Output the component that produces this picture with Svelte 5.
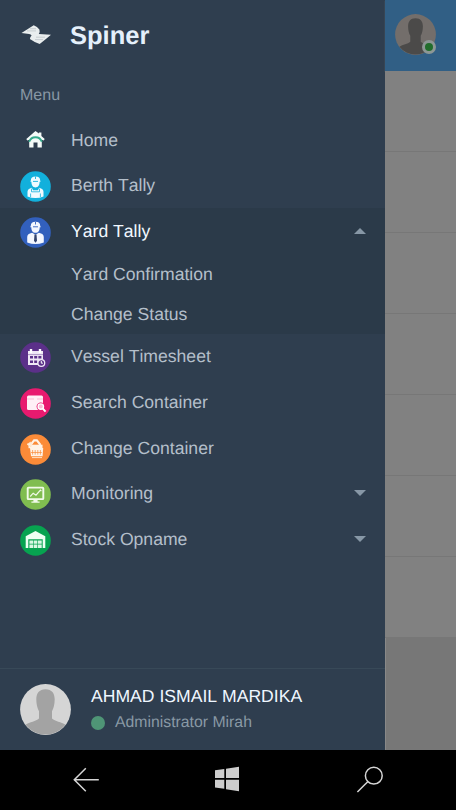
<script>
  const before = [
    { label: 'Home', icon: 'home' },
    { label: 'Berth Tally', icon: 'worker', color: '#12b0dc' }
  ];
  const after = [
    { label: 'Vessel Timesheet', icon: 'calendar', color: '#5b3089' },
    { label: 'Search Container', icon: 'search', color: '#e81a6f' },
    { label: 'Change Container', icon: 'basket', color: '#fb8b38' },
    { label: 'Monitoring', icon: 'monitor', color: '#80bd50', caret: true },
    { label: 'Stock Opname', icon: 'warehouse', color: '#07a350', caret: true }
  ];
  const rows = [0, 1, 2, 3, 4, 5, 6];
</script>

{#snippet icon(name, color)}
  <svg class="icon" viewBox="0 0 31 31">
    {#if color}<circle cx="15.5" cy="15.5" r="15.3" fill={color} />{/if}
    {#if name === 'home'}
      <path d="M15.5 4.9 6.3 13l1 1.4 1.9-.6v7.7h4.3v-5h4v5h4.3v-7.7l1.9.6 1-1.4-3.3-3V6.6h-2.500v1z" fill="#f4faf8" />
      <path d="M9.200 15.800q1.500-4.600 6.300-4.600t6.300 4.600" fill="none" stroke="#35a98c" stroke-width="1.900" />
    {:else if name === 'worker'}
      <path d="M10.800 9.500q0-4 4.700-4t4.700 4l.4 1.300h-1c0 4-1.800 5.700-4.100 5.700s-4.100-1.700-4.100-5.700h-1z" fill="#effaff" />
      <path d="M15.500 5.500v2.500M13 10.400h5" stroke={color} stroke-width=".9" />
      <path d="M7.500 25.500v-4.700q0-3 4.300-4.100l1.300 2.500h4.800l1.300-2.500q4.300 1.100 4.300 4.100v4.700q-4 1.500-8 1.500t-8-1.500z" fill="#effaff" />
      <path d="M11.500 17.600v3.200h8v-3.200M10.600 22.500v3.500M20.400 22.500v3.500" fill="none" stroke={color} stroke-width=".8" />
    {:else if name === 'manager'}
      <path d="M10.800 8.800q0-4 4.700-4t4.700 4l.6 1.400h-1.100c0 4-1.900 5.600-4.200 5.600s-4.200-1.600-4.200-5.600h-1.100z" fill="#f4f7ff" />
      <path d="M15.500 5v2.500M13 9.800h5" stroke={color} stroke-width=".9" />
      <path d="M7.200 25.500V20q0-3.100 4.900-4.200l3.400 2 3.400-2q4.900 1.100 4.900 4.200v5.500q-4.300 1.500-8.300 1.500t-8.300-1.500z" fill="#f4f7ff" />
      <path d="m14.500 17.500-.5 6.200 1.500 2 1.500-2-.5-6.200z" fill="#33436d" />
    {:else if name === 'calendar'}
      <path d="M8 9h15v14H8z" fill="#eee7f5" />
      <path d="M11 7v4M20 7v4" stroke="#fff" stroke-width="2.400" />
      <path d="M8 12.600h15" stroke="#9b7fb8" stroke-width=".8" />
      <path d="M10 14h3v2.600h-3zM14.200 14h3v2.600h-3zM18.400 14h3v2.600h-3zM10 18.500h3V21h-3zM14.200 18.500h3V21h-3z" fill={color} />
      <circle cx="21.300" cy="21" r="3.400" fill={color} stroke="#eee7f5" stroke-width="1.300" />
      <path d="M21.300 19v2.200h1.600" fill="none" stroke="#fff" />
    {:else if name === 'search'}
      <rect x="7" y="7.500" width="16" height="14.500" rx="1.500" fill="#fff0f6" />
      <path d="M7 11h7M17 11h6" stroke="#f8a9c9" stroke-width=".7" />
      <circle cx="20.800" cy="18.600" r="4.200" fill={color} />
      <circle cx="20.800" cy="18.600" r="2.700" fill="#f9bdd6" stroke="#fff" stroke-width="1.400" />
      <path d="m22.600 20.400 3 3.200" stroke="#fff" stroke-width="2" />
    {:else if name === 'basket'}
      <path d="m10.500 11 3.600-4.600h2.800l3.600 4.600" fill="none" stroke="#fff3e7" stroke-width="2.100" />
      <path d="M8.500 10.700h14v3.500h-14z" fill="#fff3e7" />
      <path d="M10 14h13.200l-.6 8.200H11z" fill="#fff3e7" />
      <path d="M12.600 16v4.700M15.200 16v4.700M17.800 16v4.700M20.400 16v4.700M11 18.500h10.800" stroke={color} stroke-width=".7" />
      <path d="M7 10.300 11 8v4.600zM12 23.600h10" fill="#fff3e7" stroke="#ffe1c3" />
      <circle cx="15.500" cy="9" r="1.100" fill={color} />
    {:else if name === 'monitor'}
      <rect x="7.700" y="8.600" width="15.600" height="11.500" rx=".7" fill="none" stroke="#f1fae9" stroke-width="1.900" />
      <path d="m10.200 17.500 3-3.300 2.800 2 4.400-5 1 1" fill="none" stroke="#f1fae9" stroke-width="1.200" />
      <path d="M13.400 20.500h4.200v2h2v1.200h-8.200v-1.200h2z" fill="#f1fae9" />
    {:else}
      <path d="M5.700 11.200 15.500 6l9.800 5.200v11.900h-2.600v-8.900H8.300v8.900H5.700z" fill="#edfff2" />
      <path d="M9.400 15.500h3.700v3.300H9.400zM13.700 15.500h3.700v3.300h-3.700zM18 15.500h3.700v3.300H18zM9.400 19.600h3.700v3.300H9.400zM13.700 19.600h3.700v3.300h-3.700zM18 19.600h3.700v3.300H18z" fill="#d9f8e3" />
    {/if}
  </svg>
{/snippet}

{#snippet person(bg, fg)}
  <svg class="person" viewBox="0 0 51 51">
    <circle cx="25.5" cy="25.5" r="25.400" fill={bg} />
    <path d="M25.500 5.200c6.500 0 9.300 4.300 9.200 10.400-.1 5-1 8.700-2.700 11.600v7.200c3 2.900 9.300 3.400 13.500 6.300a25.400 25.400 0 0 1-40 0c4.200-2.900 10.500-3.400 13.500-6.300v-7.200c-1.700-2.900-2.600-6.600-2.700-11.600-.1-6.100 2.700-10.400 9.200-10.400z" fill={fg} />
  </svg>
{/snippet}

{#snippet item(m)}
  <div class="item">
    {@render icon(m.icon, m.color)}
    <span class="label">{m.label}</span>
    {#if m.caret}<i class="caret"></i>{/if}
  </div>
{/snippet}

<div class="screen">
  <div class="main">
    <aside>
      <header>
        <svg class="logo" viewBox="0 0 30 20">
          <path d="M.5 8 12.700.3q3.700 1.200 5.700 4.200.8 2.400-.6 4.600l12.200.700q-5.600 4.800-11.300 9.300-5.600-2-9.800-5.100.2-2.200 1.700-3.500-.700-1.400-2.500-1.600z" fill="#e9edee" />
          <path d="M9 3.700h6M6 5.900h9M15 12.200h9M14 14.600h8" stroke="#b7c0c4" stroke-width=".7" />
        </svg>
        <h1>Spiner</h1>
      </header>
      <div class="heading">Menu</div>
      <nav>
        {#each before as m}{@render item(m)}{/each}
        <div class="group">
          <div class="item">
            {@render icon('manager', '#3260bd')}
            <span class="label active">Yard Tally</span>
            <i class="caret up"></i>
          </div>
          <div class="sub">Yard Confirmation</div>
          <div class="sub">Change Status</div>
        </div>
        {#each after as m}{@render item(m)}{/each}
      </nav>
      <footer>
        <div class="avatar">{@render person('#d5d5d5', '#a3a3a3')}</div>
        <div class="who">
          <div class="name">AHMAD ISMAIL MARDIKA</div>
          <div class="role"><i></i><span>Administrator Mirah</span></div>
        </div>
      </footer>
    </aside>
    <section>
      <div class="topbar">
        <div class="mini">
          {@render person('#736e6b', '#4b4a49')}
          <i class="online"></i>
        </div>
      </div>
      {#each rows as r}<div class="row"></div>{/each}
    </section>
  </div>
  <div class="system">
    <svg width="456" height="60" viewBox="0 0 456 60">
      <g fill="none" stroke="#d5d5d5" stroke-width="1.500">
        <path d="M98.800 29.700H74.500M85.800 18.200 74.300 29.700l11.500 11.500" />
        <circle cx="373.800" cy="25.700" r="8.400" />
        <path d="m367.700 31.700-10.300 10.300" />
      </g>
      <path d="m215 20.300 9.300-1.300v9H215zM226 18.700l13-1.900V28h-13zM215 29.800h9.300v9l-9.300-1.200zM226 29.800h13v11.400l-13-2z" fill="#cdcdcd" />
    </svg>
  </div>
</div>

<style>
  .screen {
    width: 456px;
    height: 810px;
    display: flex;
    flex-direction: column;
    overflow: hidden;
    background: #000;
    font-family: "Liberation Sans", Arial, sans-serif;
    text-rendering: geometricPrecision;
    font-kerning: none;
  }
  .main { display: flex; height: 749.5px; }
  aside {
    width: 384.5px;
    box-sizing: border-box;
    display: flex;
    flex-direction: column;
    background: #2f3e4f;
    color: #b4bfca;
    flex-shrink: 0;
  }
  header { display: flex; align-items: center; height: 71px; padding-left: 21px; box-sizing: border-box; }
  .logo { width: 30px; height: 20px; margin-right: 19px; margin-bottom: 2px; }
  h1 { margin: 0; font-size: 25.5px; line-height: 30px; color: #e5f0fb; }
  .heading { height: 46px; line-height: 49px; padding-left: 20px; font-size: 16px; color: #8998a5; }
  .item { display: flex; align-items: center; height: 45.6px; padding: 0 19px 0 20px; }
  .icon { width: 31px; height: 31px; margin-right: 20px; position: relative; top: 1.3px; flex-shrink: 0; }
  .label { flex: 1; padding-top: .5px; }
  .label, .sub { font-size: 17.6px; }
  .active { color: #f1f8ff; }
  .group { background: #2b3a49; }
  .sub { height: 40px; line-height: 40px; padding-left: 71px; }
  .caret { border: 6px solid transparent; border-top-color: #8797a6; border-bottom: 0; }
  .caret.up { border-top: 0; border-bottom: 6px solid #8797a6; }
  footer { margin-top: auto; height: 82px; box-sizing: border-box; border-top: 1px solid #384958; display: flex; align-items: center; padding-left: 20px; }
  .avatar { width: 51px; height: 51px; margin-right: 20px; }
  .person { display: block; width: 100%; height: 100%; }
  .name { color: #eff7ff; font-size: 17.6px; line-height: 27px; white-space: nowrap; }
  .role { display: flex; align-items: center; height: 25px; font-size: 15.8px; color: #8999a5; }
  .role span { padding-top: 1px; }
  .role i { width: 14px; height: 14px; border-radius: 50%; background: #4f9576; margin-right: 10px; }
  section { flex: 1; background: #777; box-shadow: inset 1px 0 #888; }
  .topbar { height: 71px; background: #315f85; box-shadow: 0 1px 1px #626c73; box-sizing: border-box; padding: 14px 0 0 10px; }
  .mini { position: relative; width: 41px; height: 41px; }
  .online { position: absolute; left: 27px; top: 26px; width: 8px; height: 8px; border: 3px solid #8d9795; border-radius: 50%; background: #216d2c; }
  .row { height: 81px; box-sizing: border-box; border-bottom: 1px solid #777; background: #818181; }
  .system { height: 60.5px; background: #000; }
  .system svg { display: block; }
</style>
